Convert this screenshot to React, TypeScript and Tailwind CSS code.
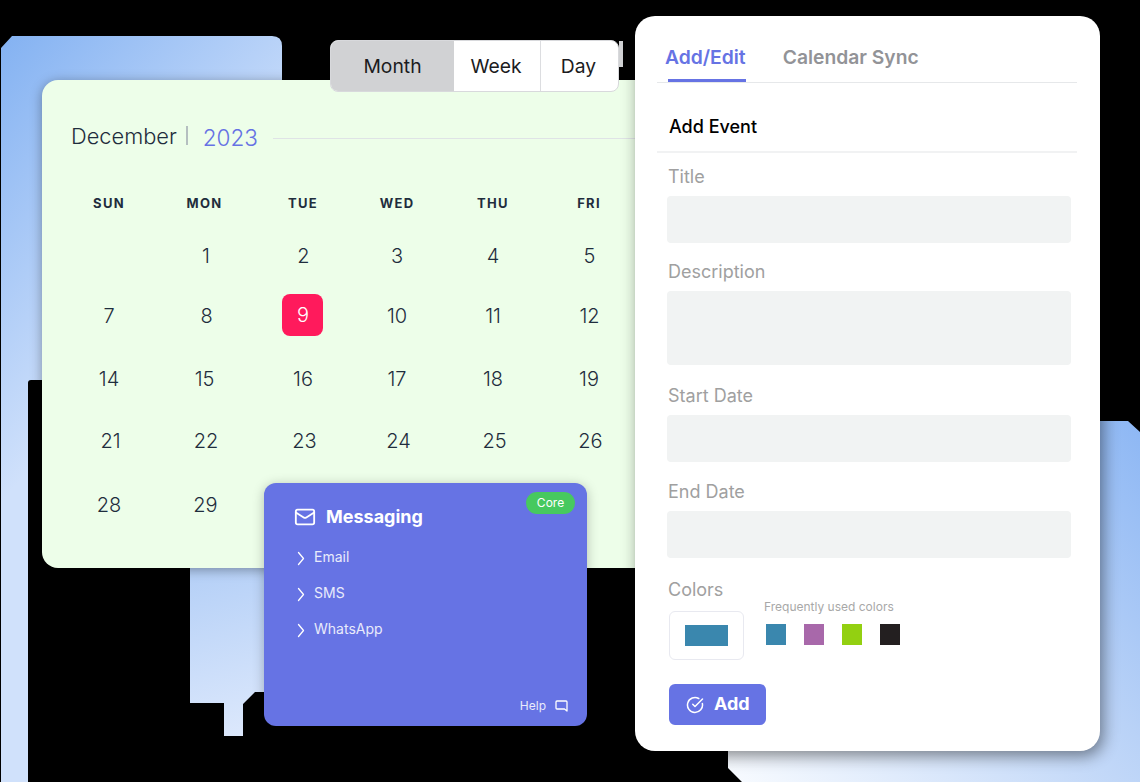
import { Mail, CircleCheckBig } from "lucide-react";

const weekdays = ["SUN", "MON", "TUE", "WED", "THU", "FRI"];

const rows: { h: string; shift: string; days: (number | null)[] }[] = [
  { h: "h-[61px]", shift: "", days: [null, 1, 2, 3, 4, 5] },
  { h: "h-[60px]", shift: "", days: [7, 8, 9, 10, 11, 12] },
  { h: "h-[65px]", shift: "", days: [14, 15, 16, 17, 18, 19] },
  { h: "h-[60px]", shift: "pl-[3px]", days: [21, 22, 23, 24, 25, 26] },
  { h: "h-[68px]", shift: "", days: [28, 29, null, null, null, null] },
];

const nudge: Record<number, string> = {
  1: "pl-[3px]",
  2: "pl-[1px]",
  5: "pl-[1px]",
  8: "pl-[4px]",
  12: "pl-[1px]",
  29: "pl-[2px]",
};

const columns = "grid grid-cols-[96px_95px_102px_86px_106px_86px]";

const fields = [
  { label: "Title", labelTop: "mt-[12px]", inputTop: "mt-[7px]", inputH: "h-[47px]" },
  { label: "Description", labelTop: "mt-[17px]", inputTop: "mt-[7px]", inputH: "h-[74px]" },
  { label: "Start Date", labelTop: "mt-[19px]", inputTop: "mt-[7px]", inputH: "h-[47px]" },
  { label: "End Date", labelTop: "mt-[18px]", inputTop: "mt-[7px]", inputH: "h-[47px]" },
];

const swatches = ["bg-[#3a87ae]", "bg-[#a868aa]", "bg-[#93d011]", "bg-[#231f20]"];

function Chevron() {
  return (
    <svg width="8" height="15" viewBox="0 0 8 15" fill="none" className="shrink-0 mt-[2px]">
      <path d="M1.5 1.5 L6.5 7.5 L1.5 13.5" stroke="#ffffff" strokeWidth="1.3" strokeLinecap="round" strokeLinejoin="round" />
    </svg>
  );
}

function HelpIcon() {
  return (
    <svg width="13" height="12" viewBox="0 0 13 12" fill="none">
      <path d="M2 1 H11 a1 1 0 0 1 1 1 V11 L9.5 9 H2 a1 1 0 0 1 -1 -1 V2 a1 1 0 0 1 1 -1 Z" stroke="#ffffff" strokeWidth="1.3" strokeLinejoin="round" />
    </svg>
  );
}

function Backdrop() {
  return (
    <svg width="1140" height="782" viewBox="0 0 1140 782" className="absolute inset-0">
      <defs>
        <linearGradient id="a" gradientUnits="userSpaceOnUse" x1="0" y1="40" x2="230" y2="240">
          <stop offset="0" stopColor="#84b2f2" />
          <stop offset="1" stopColor="#d0e1fb" />
        </linearGradient>
        <linearGradient id="b" gradientUnits="userSpaceOnUse" x1="200" y1="570" x2="245" y2="735">
          <stop offset="0" stopColor="#b5d0f7" />
          <stop offset="1" stopColor="#dce8fc" />
        </linearGradient>
        <linearGradient id="c" gradientUnits="userSpaceOnUse" x1="1140" y1="420" x2="728" y2="782">
          <stop offset="0" stopColor="#8db7f4" />
          <stop offset="0.385" stopColor="#b9d2f7" />
          <stop offset="1" stopColor="#f8fbff" />
        </linearGradient>
      </defs>
      <path d="M1 48 L12 36 H272 Q282 36 282 46 V100 H60 V380 H31 Q28 380 28 383 V782 H1 Z" fill="url(#a)" />
      <path d="M190 560 H300 V692 H255 L243 704 V736 H224 V703 H190 Z" fill="url(#b)" />
      <path d="M1090 421 H1128 L1140 432 V782 H742 L728 768 V740 H1090 Z" fill="url(#c)" />
    </svg>
  );
}

export default function App() {
  return (
    <div className="relative w-[1140px] h-[782px] overflow-hidden bg-black [font-family:Inter,sans-serif]">
      <Backdrop />

      {/* Calendar */}
      <div className="absolute left-[42px] top-[80px] w-[620px] h-[488px] rounded-[16px] bg-[#edfee9] shadow-[0_2px_12px_rgba(0,0,0,0.35)] pt-[43px] pl-[19px] text-[#1f2d3d]">
        <div className="flex items-center h-[30px] pl-[10px]">
          <span className="text-[21.8px] leading-[30px] font-light -mt-[5px]">December</span>
          <span className="w-[2px] h-[19px] bg-[#b5bfc0] ml-[9px] -mt-[5px]" />
          <span className="text-[22.5px] leading-[30px] font-light text-[#6672e4] ml-[15px]">2023</span>
          <span className="flex-1 h-px bg-[#dfe3e6] ml-[15px]" />
        </div>
        <div className={`${columns} mt-[40px] h-[20px] items-center`}>
          {weekdays.map((d) => (
            <div key={d} className="text-center text-[13px] leading-[20px] font-bold tracking-[1.3px]">
              {d}
            </div>
          ))}
        </div>
        <div className="mt-[12px]">
          {rows.map((row, i) => (
            <div key={i} className={`${columns} ${row.h} items-center`}>
              {row.days.map((d, j) => (
                <div key={j} className={`flex justify-center items-center ${row.shift} ${d !== null && nudge[d] ? nudge[d] : ""}`}>
                  {d === 9 ? (
                    <span className="flex items-center justify-center w-[41px] h-[42px] -mt-[2px] -ml-[2px] pl-[2px] rounded-[8px] bg-[#ff1a5c] text-white text-[20px] font-light">
                      9
                    </span>
                  ) : (
                    <span className="text-[20px] leading-[28px] font-light">{d}</span>
                  )}
                </div>
              ))}
            </div>
          ))}
        </div>
      </div>

      {/* View switch */}
      <div className="absolute left-[619px] top-[41px] w-[4px] h-[26px] bg-[#d1d2d4]" />
      <div className="absolute left-[330px] top-[40px] w-[289px] h-[52px] flex rounded-[8px] overflow-hidden border border-[#d8d9dc] text-[19.3px] text-[#1c1c1e] bg-white">
        <div className="w-[123px] flex items-center justify-center bg-[#d1d2d4]">Month</div>
        <div className="w-[87px] pr-[2px] flex items-center justify-center border-r border-[#dcdde0]">Week</div>
        <div className="flex-1 pr-[2px] flex items-center justify-center">Day</div>
      </div>

      {/* Messaging */}
      <div className="absolute left-[264px] top-[483px] w-[323px] h-[243px] rounded-[12px] bg-[#6673e4] shadow-[0_2px_12px_rgba(0,0,0,0.25)] text-white flex flex-col">
        <div className="absolute right-[12px] top-[9px] w-[49px] h-[22px] rounded-full bg-[#47c95f] flex items-center justify-center text-[12px]">
          Core
        </div>
        <div className="flex items-center pl-[30px] pt-[21px] h-[47px]">
          <Mail size={22} strokeWidth={2} />
          <span className="ml-[10px] text-[18px] font-bold leading-[26px]">Messaging</span>
        </div>
        <div className="flex flex-col gap-[16px] pl-[33px] mt-[17px]">
          {["Email", "SMS", "WhatsApp"].map((t) => (
            <div key={t} className="flex items-center h-[20px]">
              <Chevron />
              <span className="ml-[9px] text-[14px] leading-[20px] text-[#e9ebfb]">{t}</span>
            </div>
          ))}
        </div>
        <div className="mt-auto mb-[12px] flex items-center justify-end pr-[19px] gap-[9px] text-[12px] leading-[16px] text-[#e9ebfb]">
          <span>Help</span>
          <HelpIcon />
        </div>
      </div>

      {/* Event panel */}
      <div className="absolute left-[635px] top-[16px] w-[465px] h-[735px] rounded-[20px] bg-white shadow-[3px_5px_16px_rgba(0,0,0,0.45)] pl-[22px] pr-[23px]">
        <div className="flex pt-[27px] text-[19.3px] leading-[28px] font-semibold">
          <span className="ml-[8px] text-[#6673e4]">Add/Edit</span>
          <span className="ml-[37px] text-[#929397]">Calendar Sync</span>
        </div>
        <div className="ml-[11px] w-[78px] h-[3px] mt-[8px] bg-[#6673e4]" />
        <div className="h-px bg-[#e6e8ea]" />
        <div className="h-[68px] pt-[19px] pl-[12px] flex items-center text-[18px] font-medium text-black">Add Event</div>
        <div className="h-[2px] bg-[#f1f2f3]" />
        {fields.map((f) => (
          <div key={f.label}>
            <div className={`${f.labelTop} ml-[11px] text-[18px] leading-[24px] text-[#a0a0a0]`}>{f.label}</div>
            <div className={`${f.inputTop} ${f.inputH} ml-[10px] w-[404px] rounded-[4px] bg-[#f1f3f3]`} />
          </div>
        ))}
        <div className="mt-[20px] ml-[11px] text-[18px] leading-[24px] text-[#a0a0a0]">Colors</div>
        <div className="flex items-start ml-[12px] mt-[9px]">
          <div className="w-[75px] h-[49px] rounded-[6px] border border-[#e8e9f0] flex items-center justify-center">
            <div className="w-[43px] h-[21px] bg-[#3a87ae]" />
          </div>
          <div className="ml-[20px] -mt-[11px]">
            <div className="h-[14px] text-[12px] leading-[14px] text-[#a8a8a8]">Frequently used colors</div>
            <div className="flex gap-[18px] ml-[2px] mt-[10px]">
              {swatches.map((s) => (
                <div key={s} className={`w-[20px] h-[21px] ${s}`} />
              ))}
            </div>
          </div>
        </div>
        <div className="mt-[24px] ml-[12px] w-[97px] h-[41px] rounded-[6px] bg-[#6673e4] flex items-center pl-[17px] text-white text-[18px] font-bold">
          <CircleCheckBig size={18} strokeWidth={2} />
          <span className="ml-[10px] -mt-[2px]">Add</span>
        </div>
      </div>
    </div>
  );
}
